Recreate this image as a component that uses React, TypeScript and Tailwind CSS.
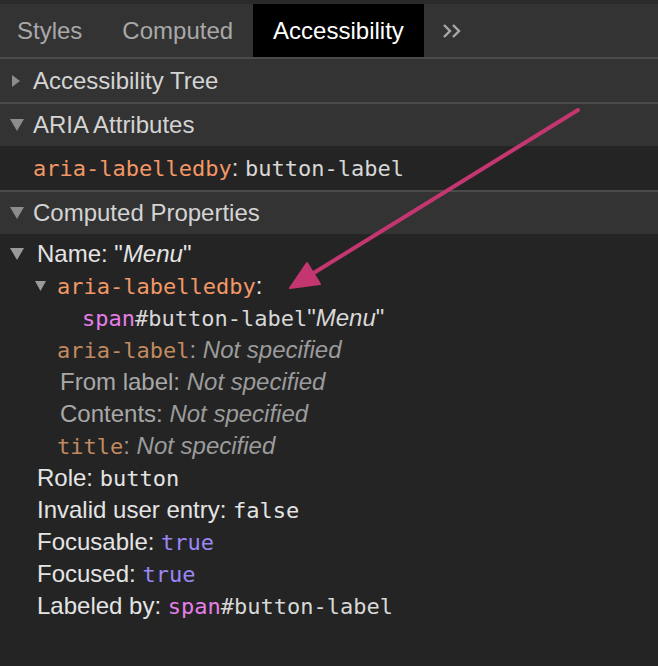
import React from 'react';

const mono = "font-['DejaVu_Sans_Mono','Liberation_Mono',monospace] text-[22px]";

function TriangleDown({ w = 14, h = 12, color = '#8c8c8c' }: { w?: number; h?: number; color?: string }) {
  return (
    <svg width={w} height={h} viewBox={`0 0 ${w} ${h}`} className="block">
      <polygon points={`0,0 ${w},0 ${w / 2},${h}`} fill={color} />
    </svg>
  );
}

function TriangleRight() {
  return (
    <svg width={14} height={12} viewBox="0 0 14 12" className="block">
      <polygon points="2,0 10,6 2,12" fill="#8c8c8c" />
    </svg>
  );
}

function SectionHeader({ title, open, height }: { title: string; open: boolean; height: string }) {
  return (
    <div className={`flex items-center bg-[#333333] pl-[10px] text-[#d4d4d4] ${height}`}>
      <div className="w-[23px]">{open ? <TriangleDown /> : <TriangleRight />}</div>
      <span>{title}</span>
    </div>
  );
}

function Line({ indent, children }: { indent: string; children: React.ReactNode }) {
  return (
    <div className={`flex h-[32px] items-center whitespace-nowrap ${indent}`}>
      <span>{children}</span>
    </div>
  );
}

function NotSpecified() {
  return <span className="italic text-[#9b9b9b]">Not specified</span>;
}

export default function App() {
  return (
    <div className="relative h-[666px] w-[658px] overflow-hidden bg-[#242424] font-['Liberation_Sans',Arial,sans-serif] text-[24px] text-[#e4e4e4]">
      <div className="h-[4px] bg-[#2a2a2a]" />
      <div className="flex h-[53px] items-stretch bg-[#333333]">
        <div className="flex items-center pl-[17px] pr-[20px] text-[#a8a8a8]">Styles</div>
        <div className="flex items-center px-[20px] text-[#a8a8a8]">Computed</div>
        <div className="flex items-center bg-black px-[20px] text-white">Accessibility</div>
        <div className="flex items-center pl-[18px]">
          <svg width={20} height={16} viewBox="0 0 20 16" fill="none" stroke="#a8a8a8" strokeWidth={2.4}>
            <path d="M2 2 L8 8 L2 14" />
            <path d="M11 2 L17 8 L11 14" />
          </svg>
        </div>
      </div>
      <div className="h-[2px] bg-[#4a4a4a]" />
      <SectionHeader title="Accessibility Tree" open={false} height="h-[43px]" />
      <div className="h-[2px] bg-[#4a4a4a]" />
      <SectionHeader title="ARIA Attributes" open height="h-[42px]" />
      <div className="flex h-[44px] items-center bg-[#242424] pl-[33px]">
        <span>
          <span className={`${mono} text-[#f29766]`}>aria-labelledby</span>
          <span className="text-[#d8d8d8]">: </span>
          <span className={`${mono} text-[#d8d8d8]`}>button-label</span>
        </span>
      </div>
      <div className="h-[2px] bg-[#4a4a4a]" />
      <SectionHeader title="Computed Properties" open height="h-[42px]" />

      <div className="pt-[4px]">
        <div className="flex h-[32px] items-center pl-[10px]">
          <div className="w-[27px]">
            <TriangleDown w={14} h={12} color="#9a9a9a" />
          </div>
          <span>
            Name: "<span className="italic">Menu</span>"
          </span>
        </div>
        <div className="flex h-[32px] items-center pl-[35px]">
          <div className="w-[22px]">
            <TriangleDown w={11} h={10} color="#9a9a9a" />
          </div>
          <span>
            <span className={`${mono} text-[#f29766]`}>aria-labelledby</span>:
          </span>
        </div>
        <Line indent="pl-[82px]">
          <span className={`${mono} text-[#e57fe8]`}>span</span>
          <span className={`${mono} text-[#d8d8d8]`}>#button-label</span>
          <span className="text-[#d8d8d8]">
            "<span className="italic">Menu</span>"
          </span>
        </Line>
        <Line indent="pl-[57px]">
          <span className={`${mono} text-[#c28a60]`}>aria-label</span>
          <span className="text-[#9b9b9b]">: </span>
          <NotSpecified />
        </Line>
        <Line indent="pl-[60px]">
          <span className="text-[#a8a8a8]">From label: </span>
          <NotSpecified />
        </Line>
        <Line indent="pl-[60px]">
          <span className="text-[#a8a8a8]">Contents: </span>
          <NotSpecified />
        </Line>
        <Line indent="pl-[57px]">
          <span className={`${mono} text-[#c28a60]`}>title</span>
          <span className="text-[#9b9b9b]">: </span>
          <NotSpecified />
        </Line>
        <Line indent="pl-[37px]">
          Role: <span className={`${mono} text-[#e4e4e4]`}>button</span>
        </Line>
        <Line indent="pl-[37px]">
          Invalid user entry: <span className={`${mono} text-[#e4e4e4]`}>false</span>
        </Line>
        <Line indent="pl-[37px]">
          Focusable: <span className={`${mono} text-[#9b86f7]`}>true</span>
        </Line>
        <Line indent="pl-[37px]">
          Focused: <span className={`${mono} text-[#9b86f7]`}>true</span>
        </Line>
        <Line indent="pl-[37px]">
          Labeled by: <span className={`${mono} text-[#e57fe8]`}>span</span>
          <span className={`${mono} text-[#d8d8d8]`}>#button-label</span>
        </Line>
      </div>

      {/* annotation arrow drawn over the panel */}
      <svg className="pointer-events-none absolute inset-0" width={658} height={666} viewBox="0 0 658 666">
        <line x1={578} y1={110} x2={312} y2={274} stroke="#c4366f" strokeWidth={4} strokeLinecap="round" />
        <polygon points="290,288 307,263 320,284" fill="#c4366f" stroke="#c4366f" strokeWidth={2} strokeLinejoin="round" />
      </svg>
    </div>
  );
}
